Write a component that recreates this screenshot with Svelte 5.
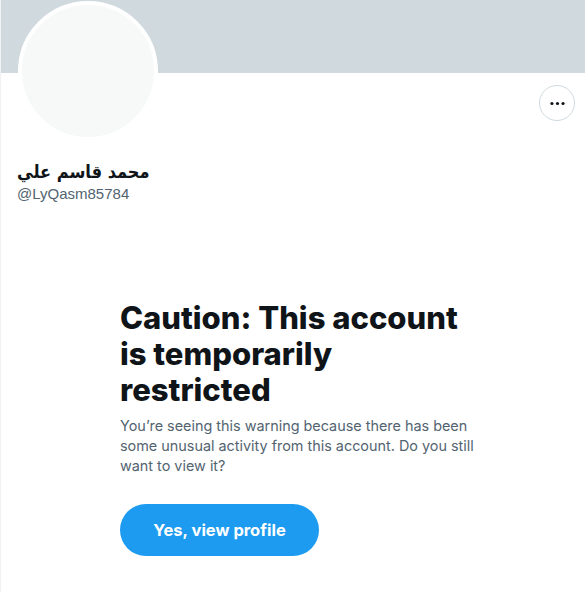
<script lang="ts">
	const name = 'محمد قاسم علي';
	const handle = '@LyQasm85784';
</script>

<main class="profile">
	<div class="banner"></div>

	<div class="head">
		<div class="avatar"></div>
		<button class="more" aria-label="More">
			<svg viewBox="0 0 24 24" width="19" height="19">
				<circle cx="5" cy="12" r="2" />
				<circle cx="12" cy="12" r="2" />
				<circle cx="19" cy="12" r="2" />
			</svg>
		</button>
	</div>

	<div class="names">
		<div class="name" dir="rtl">{name}</div>
		<div class="handle">{handle}</div>
	</div>

	<section class="notice">
		<h1>Caution: This account is temporarily restricted</h1>
		<p>You’re seeing this warning because there has been some unusual activity from this account. Do you still want to view it?</p>
		<button class="view">Yes, view profile</button>
	</section>
</main>

<style>
	:global(body) {
		background: #fff;
	}

	.profile {
		height: 592px;
		box-sizing: border-box;
		border-left: 1px solid #eff3f4;
		overflow: hidden;
		font-family: Inter, 'Liberation Sans', sans-serif;
	}

	.banner {
		height: 73px;
		background: #cfd9de;
	}

	.head {
		display: flex;
		justify-content: space-between;
		align-items: flex-start;
		padding: 0 10px 0 17px;
	}

	.avatar {
		width: 132px;
		height: 132px;
		margin-top: -72px;
		border: 4px solid #fff;
		border-radius: 50%;
		background: #f7f9f9;
	}

	.more {
		width: 36px;
		height: 36px;
		margin-top: 12px;
		padding: 0;
		display: flex;
		align-items: center;
		justify-content: center;
		background: #fff;
		border: 1px solid #cfd9de;
		border-radius: 50%;
	}

	.more svg {
		fill: #0f1419;
	}

	.names {
		padding: 18px 0 0 16px;
	}

	.name {
		width: fit-content;
		font-family: 'DejaVu Sans Condensed', 'DejaVu Sans', sans-serif;
		font-stretch: condensed;
		font-size: 18px;
		font-weight: 700;
		line-height: 25px;
		color: #0f1419;
	}

	.handle {
		font-family: 'Liberation Sans', sans-serif;
		font-size: 15px;
		line-height: 20px;
		color: #536471;
	}

	.notice {
		width: 360px;
		margin: 96px 0 0 119px;
	}

	h1 {
		margin: 0;
		font-size: 31px;
		font-weight: 800;
		line-height: 36px;
		color: #0f1419;
	}

	p {
		margin: 8px 0 0;
		font-size: 14.4px;
		line-height: 20px;
		color: #536471;
	}

	.view {
		display: block;
		width: 199px;
		height: 52px;
		margin-top: 28px;
		border: 0;
		border-radius: 26px;
		background: #1d9bf0;
		color: #fff;
		font: 700 16.5px Inter, sans-serif;
	}
</style>
